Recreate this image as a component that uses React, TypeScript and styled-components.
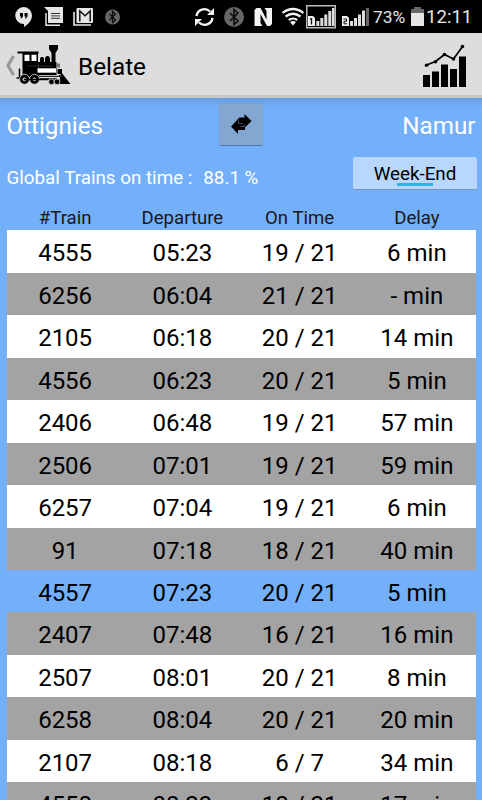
import React from 'react';
import styled, { createGlobalStyle } from 'styled-components';

const GlobalStyle = createGlobalStyle`
  * { box-sizing: border-box; }
  html, body { margin: 0; padding: 0; background: #74b0f9; }
  body { font-family: Roboto, "Liberation Sans", sans-serif; overflow: hidden; }
`;

const Screen = styled.div`
  width: 482px;
  height: 800px;
  overflow: hidden;
  display: flex;
  flex-direction: column;
  background: #74b0f9;
  color: #000;
`;

const StatusBar = styled.header`
  height: 33px;
  flex: none;
  display: flex;
  background: #000;
  color: #e6e6e6;
`;

const StatusIcon = styled.svg<{ $gap?: number }>`
  display: block;
  flex: none;
  margin-left: ${(p) => p.$gap ?? 0}px;
`;

const StatusText = styled.span<{ $width: number; $gap: number; $size: number }>`
  width: ${(p) => p.$width}px;
  margin-left: ${(p) => p.$gap}px;
  font-size: ${(p) => p.$size}px;
  line-height: 35px;
  white-space: nowrap;
`;

const ActionBar = styled.nav`
  height: 65px;
  flex: none;
  display: flex;
  align-items: flex-start;
  background: #dddddd;
  border-bottom: 3px solid #c6c8ca;
`;

const Title = styled.h1`
  margin: 0 auto 0 6px;
  font-size: 24.3px;
  line-height: 68px;
  font-weight: 400;
`;

const ChartIcon = styled.svg`
  margin: 10px 14px 0 0;
`;

const Content = styled.main`
  flex: 1;
  min-height: 0;
  padding: 4px 6.5px 0 6.5px;
  background: linear-gradient(#669ddd, #74b0f9 9px);
`;

const RouteRow = styled.section`
  display: grid;
  grid-template-columns: 1fr 44px 1fr;
  height: 45px;
  color: #fff;
  font-size: 24.2px;
  line-height: 48px;
`;

const Station = styled.span<{ $end?: boolean }>`
  text-align: ${(p) => (p.$end ? 'right' : 'left')};
`;

const SwapButton = styled.button`
  display: flex;
  width: 44px;
  height: 43px;
  margin: 1px 0 0 -0.5px;
  padding: 9px 0 0 10px;
  border: 1px solid #7d9fc8;
  border-bottom: 1px solid #5078a8;
  border-radius: 2px;
  background: #84a7d2;
`;

const SummaryRow = styled.section`
  display: flex;
  justify-content: space-between;
  height: 55px;
  color: #fff;
  font-size: 18.8px;
  line-height: 63px;
`;

const SummaryLabel = styled.span`
  margin-right: 11px;
`;

const WeekEndToggle = styled.button`
  display: flex;
  flex-direction: column;
  align-items: center;
  width: 124px;
  height: 33px;
  margin: 10px -1.5px 0 0;
  padding: 6px 0 0;
  border: 0;
  border-radius: 2px;
  border-bottom: 1px solid #7595bd;
  background: #b9d7fc;
  color: #000;
  font: 18.8px/22px Roboto, sans-serif;
`;

const ToggleMark = styled.span`
  width: 36px;
  height: 3px;
  margin-top: -2px;
  background: #30b2e3;
`;

const Columns = styled.div`
  display: grid;
  grid-template-columns: repeat(4, 1fr);
  text-align: center;
`;

const TableHead = styled(Columns)`
  height: 28.4px;
  font-size: 18.6px;
  line-height: 32px;
  color: #1d1715;
`;

const rowColors = { white: '#ffffff', gray: '#a3a3a3', current: '#74b0f9' };

const TrainRow = styled(Columns)<{ $tone: keyof typeof rowColors }>`
  height: 42.46px;
  font-size: 24px;
  line-height: 46px;
  background: ${(p) => rowColors[p.$tone]};
`;

const trains = [
  ['4555', '05:23', '19 / 21', '6 min'],
  ['6256', '06:04', '21 / 21', '- min'],
  ['2105', '06:18', '20 / 21', '14 min'],
  ['4556', '06:23', '20 / 21', '5 min'],
  ['2406', '06:48', '19 / 21', '57 min'],
  ['2506', '07:01', '19 / 21', '59 min'],
  ['6257', '07:04', '19 / 21', '6 min'],
  ['91', '07:18', '18 / 21', '40 min'],
  ['4557', '07:23', '20 / 21', '5 min'],
  ['2407', '07:48', '16 / 21', '16 min'],
  ['2507', '08:01', '20 / 21', '8 min'],
  ['6258', '08:04', '20 / 21', '20 min'],
  ['2107', '08:18', '6 / 7', '34 min'],
  ['4558', '08:23', '18 / 21', '17 min'],
];

const nextTrain = '4557';

function Bluetooth({ size, gap }: { size: number; gap: number }) {
  return (
    <StatusIcon $gap={gap} width={size} height="33" viewBox={`${-size / 2} -17 ${size} 33`}>
      <circle r={size / 2} fill="#666" />
      <path
        transform={`scale(${size / 20})`}
        d="M-4-4L4 4L0 7.5V-7.5L4-4L-4 4"
        fill="none"
        stroke="#0b0b0b"
        strokeWidth="1.6"
      />
    </StatusIcon>
  );
}

function Status() {
  return (
    <StatusBar>
      <StatusIcon $gap={15} width="18" height="33" viewBox="15 0 18 33">
        <path d="M23.5 7a8.5 8.5 0 0 1 8.5 8.5c0 5-4 9-8 11.5V24A8.5 8.5 0 0 1 23.5 7z" fill="#e6e6e6" />
        <path d="M20 13h3v3.5l-1.500 2h-1l.8-2H20zM24.500 13h3v3.500l-1.500 2h-1l.8-2h-1.300z" fill="#000" />
      </StatusIcon>
      <StatusIcon $gap={11} width="20" height="33" viewBox="44 0 20 33">
        <path d="M44 7h19v16H48V11z" fill="#e6e6e6" />
        <path d="M46 13v12.2h14" fill="none" stroke="#e6e6e6" strokeWidth="1.5" />
        <path d="M51 13.5h9M51 15.900h9M51 18.300h9" stroke="#333" strokeWidth="1" />
      </StatusIcon>
      <StatusIcon $gap={9} width="21" height="33" viewBox="73 0 21 33">
        <rect x="76.5" y="8" width="16.5" height="15" rx="1" fill="#e6e6e6" />
        <path d="M79.8 21.500V11L85 15.800L90.200 11V21.500" fill="none" stroke="#111" strokeWidth="1.500" />
        <path d="M74 12v13h17" fill="none" stroke="#e6e6e6" strokeWidth="1.6" />
      </StatusIcon>
      <Bluetooth size={15} gap={11} />
      <StatusIcon $gap={73} width="22" height="33" viewBox="193 0 22 33">
        <path d="M196.500 16A8 8 0 0 1 210 11.500M212.500 18A8 8 0 0 1 199 22.500" fill="none" stroke="#f4f4f4" strokeWidth="2.400" />
        <path d="M214 8v7h-7zM195 26v-7h7z" fill="#f4f4f4" />
      </StatusIcon>
      <Bluetooth size={20} gap={9} />
      <StatusIcon $gap={10} width="19" height="33" viewBox="254 0 19 33">
        <path d="M254.5 10l2-2h4l6 11.500V11l-2-3h7.500v16l-2 2h-3l-6.500-12v9l2 3h-8z" fill="#f4f4f4" />
      </StatusIcon>
      <StatusIcon $gap={9} width="22" height="33" viewBox="282 0 22 33">
        <path d="M282.500 13q10.500-8 21 0M285.500 16.500q7.500-5.500 15 0M288.800 20q4.200-3 8.400 0" fill="none" stroke="#f2f2f2" strokeWidth="2.200" />
        <path d="M290 22q3-2 6 0l-3 3.500z" fill="#f2f2f2" />
      </StatusIcon>
      <StatusIcon $gap={2} width="30" height="33" viewBox="306 0 30 33">
        <rect x="306.750" y="5.750" width="28.500" height="22" fill="none" stroke="#bbb" strokeWidth="1.500" />
        <path d="M308 16h5l2 2v8h-7z" fill="#eee" />
        <path d="M310 19h1.500v5.500" fill="none" stroke="#111" strokeWidth="1.300" />
        <path d="M316.300 26v-5h3v5zM320.300 26v-8h3v8zM324.300 26V14.500h3V26zM328.300 26V11h3v15zM332 26V8h2.500v18z" fill="#ddd" />
      </StatusIcon>
      <StatusIcon $gap={6} width="28" height="33" viewBox="342 0 28 33">
        <path d="M342 16h5l2 2v8h-7z" fill="#eee" />
        <path d="M343.500 19h3v2.300h-2.500v2.500h3" fill="none" stroke="#111" strokeWidth="1" />
        <path d="M350 26v-5h3v5zM354 26v-8h3v8zM358 26V14.500h3V26zM362 26V10.500h3v15.500z" fill="#ddd" />
        <path d="M366 26V8h3v18z" fill="#666" />
      </StatusIcon>
      <StatusText $gap={3} $width={34} $size={17.4}>73%</StatusText>
      <StatusIcon $gap={4} width="13" height="33" viewBox="411 0 13 33">
        <path d="M411 9h3V7h7v2h3v4h-13z" fill="#666" />
        <path d="M411 13h13v13h-13z" fill="#e6e6e6" />
      </StatusIcon>
      <StatusText $gap={2} $width={48} $size={18.6}>12:11</StatusText>
    </StatusBar>
  );
}

function Locomotive() {
  return (
    <svg width="72" height="60" viewBox="0 33 72 60">
      <path d="M13.5 56L8 65.500L13.500 75" fill="none" stroke="#999" strokeWidth="3.200" />
      <path d="M17.500 51.500H38.500v2H17.500zM22.500 53H38v9h18.500v13H60v2H22.500z" />
      <path d="M24.500 54.800h5v6.200h-5zM31.500 54.800h5v6.200h-5z" fill="#fff" />
      <path d="M49 45h9v4l-2.500 4v9h-4v-9L49 49zM40 62v-3.500l1-1.500h2l1 1.500V62zM45 62v-4l1.500-2h2L50 58v4z" />
      <path d="M37.500 68.300h18.500v4.400H37.500z" fill="#fff" />
      <path d="M38.500 63v5M27 66h26" stroke="#444" strokeWidth=".6" />
      <path d="M57 63.500h3v4h-3z" fill="#777" />
      <path d="M57.500 69h4.500v5h-4.500zM61 72l9.500 12H59z" />
      <path d="M39 75.700h20" stroke="#ddd" strokeWidth="1" />
      <path d="M19.500 68.500V78M16.500 78h6M39 79h18" stroke="#000" strokeWidth="1.500" />
      <g stroke="#ddd" strokeWidth=".8">
        <circle cx="24.5" cy="79.300" r="5" />
        <circle cx="34.500" cy="79.300" r="5" />
        <circle cx="51.500" cy="81.800" r="2.900" />
        <circle cx="57" cy="81.800" r="2.900" />
      </g>
      <g fill="#bbb">
        <circle cx="24.5" cy="79.300" r="1.900" />
        <circle cx="34.500" cy="79.300" r="1.900" />
      </g>
      <path d="M24 79.500h24" stroke="#000" strokeWidth="1.500" />
    </svg>
  );
}

export default function App() {
  return (
    <>
      <GlobalStyle />
      <Screen>
        <Status />
        <ActionBar>
          <Locomotive />
          <Title>Belate</Title>
          <ChartIcon width="46" height="46" viewBox="422 43 46 46">
            <path d="M423 75h7v12h-7zM432 71.500h7V87h-7zM441 64.500h7V87h-7zM450 69h7v18h-7zM459 56.500h7V87h-7z" />
            <path d="M426.500 65l9-3.500 9-7 9 4.500 9-12.500" fill="none" stroke="#000" strokeWidth="1.700" />
            <circle cx="426.500" cy="65.300" r="1.800" />
            <circle cx="435.500" cy="61.700" r="1.800" />
            <circle cx="444.500" cy="54.500" r="1.800" />
            <circle cx="453.500" cy="59" r="1.800" />
            <circle cx="462.500" cy="46.500" r="1.800" />
          </ChartIcon>
        </ActionBar>
        <Content>
          <RouteRow>
            <Station>Ottignies</Station>
            <SwapButton aria-label="Swap stations">
              <svg width="22" height="22" viewBox="230 113 22 22">
                <path d="M231 126.500l7-7.500v3.500h7v7.500h-7v4z" />
                <path d="M251.500 121l-7-7v3.500h-5l-2 2v5h7v3.500z" />
                <path d="M238.500 119.500v4h4.500M244.500 124.500v2h-4" fill="none" stroke="#667894" strokeWidth=".6" />
              </svg>
            </SwapButton>
            <Station $end>Namur</Station>
          </RouteRow>
          <SummaryRow>
            <span>
              <SummaryLabel>Global Trains on time :</SummaryLabel>
              88.1 %
            </span>
            <WeekEndToggle>
              Week-End
              <ToggleMark />
            </WeekEndToggle>
          </SummaryRow>
          <TableHead>
            <span>#Train</span>
            <span>Departure</span>
            <span>On Time</span>
            <span>Delay</span>
          </TableHead>
          {trains.map((train, i) => (
            <TrainRow key={train[0]} $tone={train[0] === nextTrain ? 'current' : i % 2 ? 'gray' : 'white'}>
              {train.map((value, column) => (
                <span key={column}>{value}</span>
              ))}
            </TrainRow>
          ))}
        </Content>
      </Screen>
    </>
  );
}
